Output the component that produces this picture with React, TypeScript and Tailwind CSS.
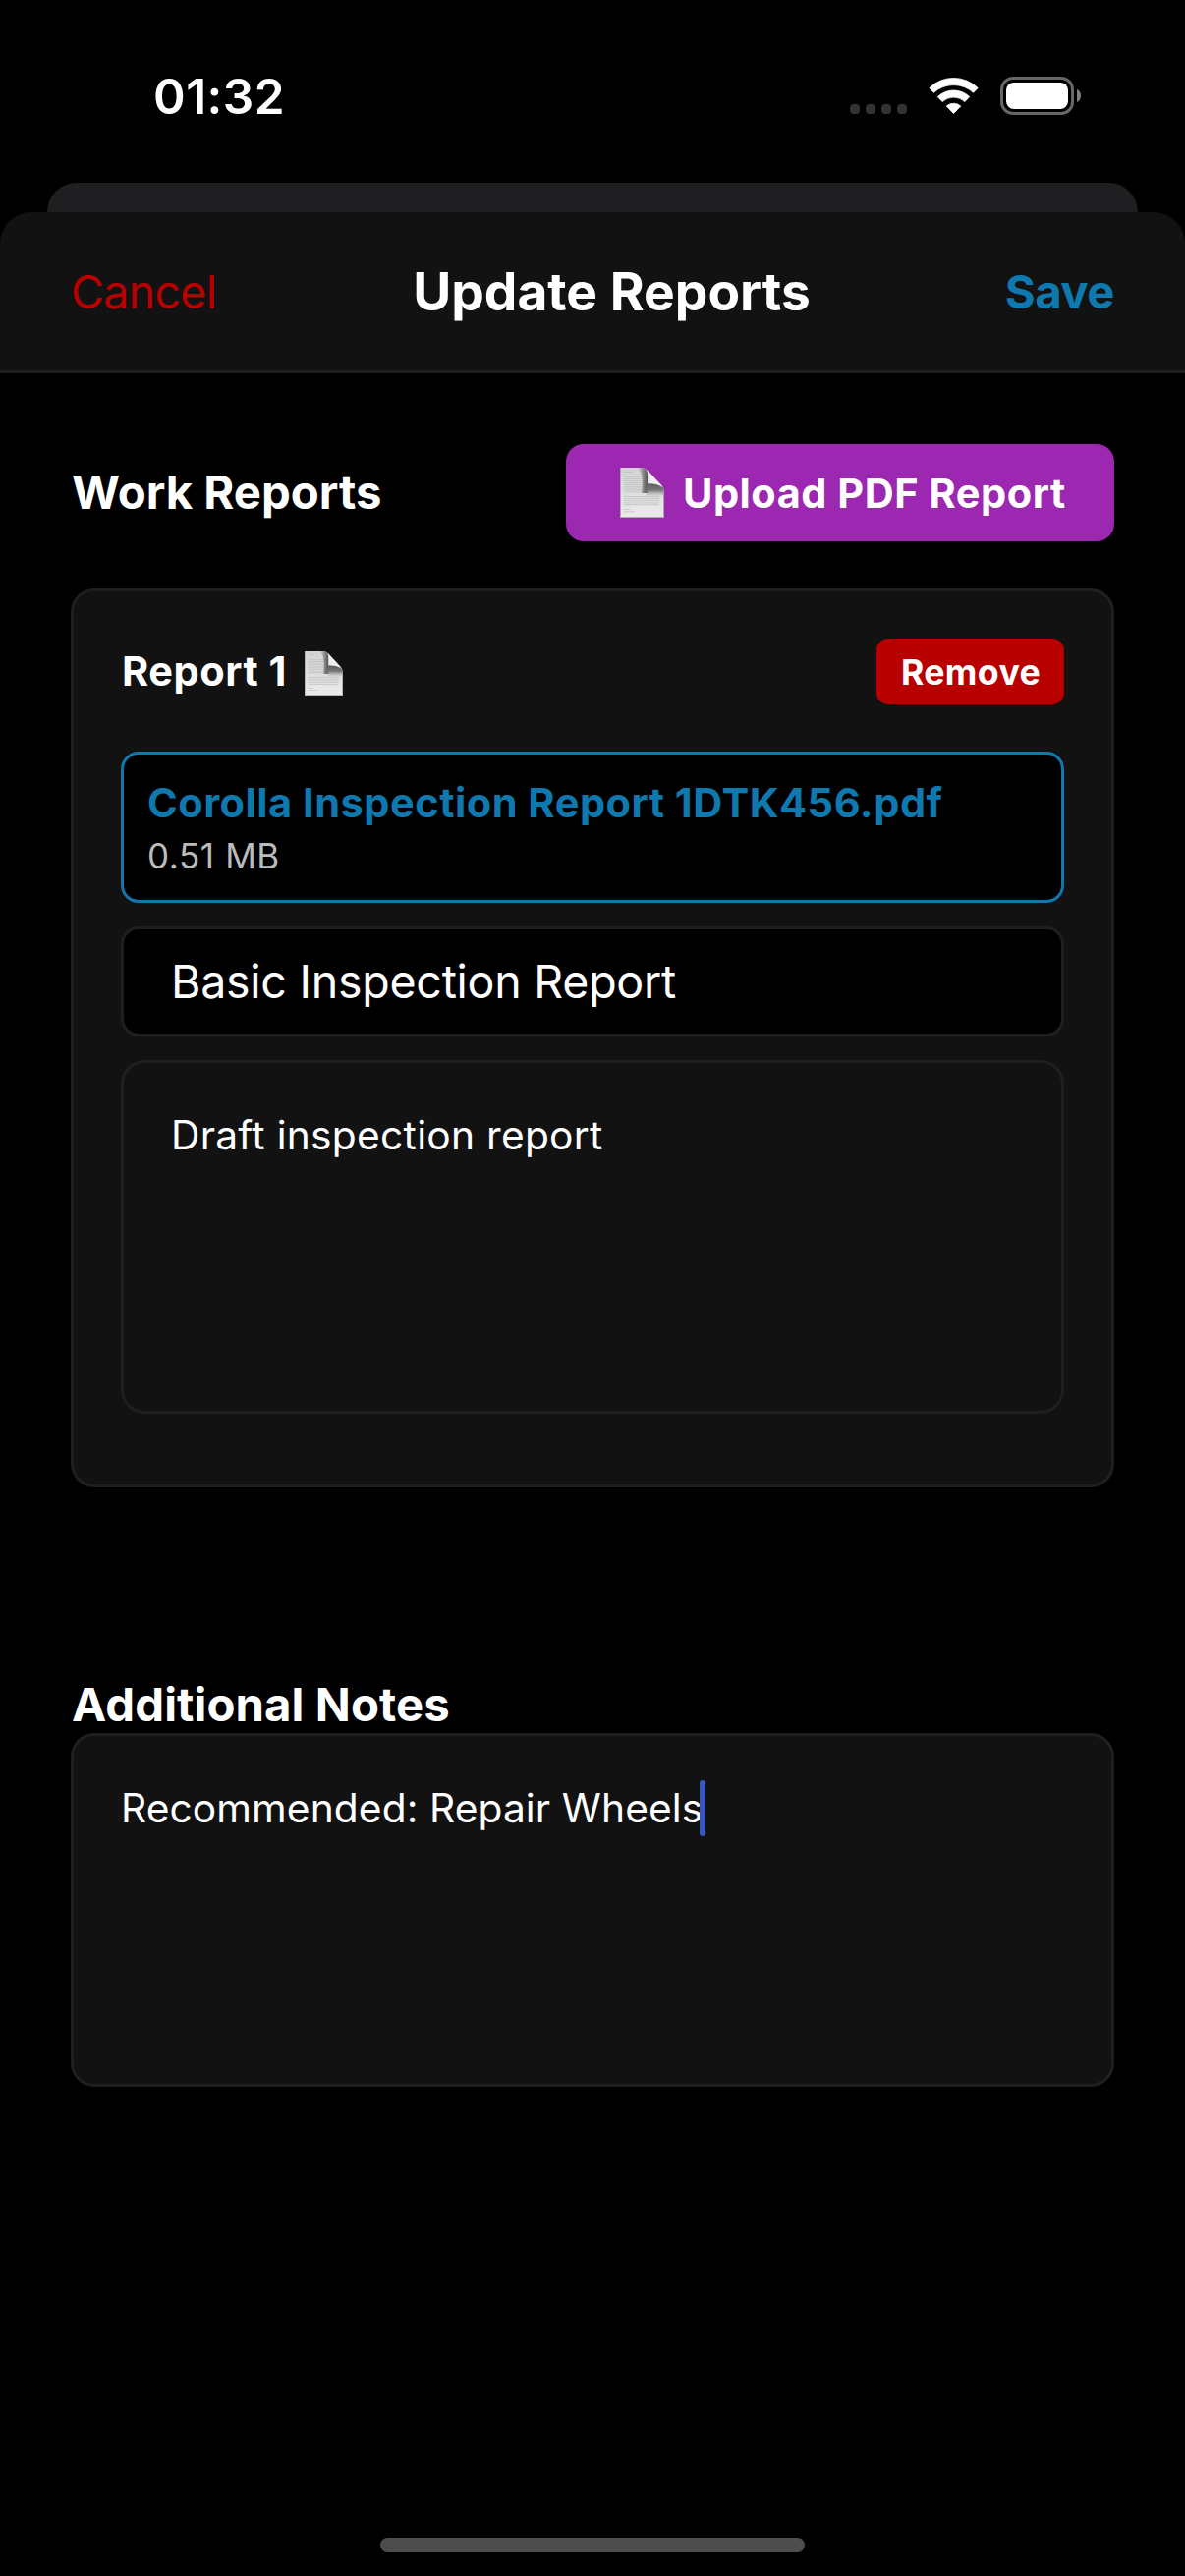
function Wifi() {
  return (
    <svg width="51" height="37" viewBox="0 0 51 37" className="block" fill="#fff" stroke="#fff" strokeWidth="0.8" strokeLinejoin="round">
      <path d="M0.8 10.6A35 35 0 0 1 50.2 10.6L45.6 15.3A30 30 0 0 0 5.4 15.3Z" />
      <path d="M9.3 19.6A23.2 23.2 0 0 1 41.7 19.6L36.9 24.6A16.6 16.6 0 0 0 14.1 24.6Z" />
      <path d="M18.2 29A11 11 0 0 1 32.8 29L25.5 36.6Z" />
    </svg>
  );
}

function Battery() {
  return (
    <div className="flex items-center gap-[3px]">
      <div className="h-[39px] w-[75px] rounded-[13px] border-[3px] border-[#666666] p-[3px]">
        <div className="h-full w-full rounded-[8px] bg-white" />
      </div>
      <svg width="4" height="13" viewBox="0 0 4 13" className="block">
        <path d="M0 0C2.6 1.2 4 3.6 4 6.5S2.6 11.8 0 13Z" fill="#808080" />
      </svg>
    </div>
  );
}

function PageIcon({ id, className }: { id: string; className: string }) {
  const lines = [
    [4, 11.5], [9.3, 26], [11.2, 24], [13.1, 25], [15, 24], [16.9, 26], [18.8, 25], [20.7, 25], [22.6, 26], [24.5, 22],
    [29.3, 36], [31.4, 37], [33.5, 36], [35.6, 36], [37.4, 35], [42, 10], [44.5, 15],
  ];
  return (
    <svg viewBox="0 0 45 51" preserveAspectRatio="none" className={className}>
      <defs>
        <linearGradient id={`${id}-paper`} x1="0" y1="0" x2="0" y2="1">
          <stop offset="0" stopColor="#d4d4d4" />
          <stop offset="0.5" stopColor="#dedede" />
          <stop offset="1" stopColor="#ececec" />
        </linearGradient>
        <linearGradient id={`${id}-left`} x1="0" y1="0" x2="1" y2="0">
          <stop offset="0" stopColor="#4a4a4a" stopOpacity="0" />
          <stop offset="1" stopColor="#4a4a4a" stopOpacity="0.95" />
        </linearGradient>
        <linearGradient id={`${id}-under`} x1="0" y1="0" x2="0" y2="1">
          <stop offset="0" stopColor="#5c5c5c" />
          <stop offset="0.5" stopColor="#777777" />
          <stop offset="1" stopColor="#bbbbbb" stopOpacity="0" />
        </linearGradient>
        <linearGradient id={`${id}-flap`} x1="1" y1="0" x2="0" y2="1">
          <stop offset="0" stopColor="#ffffff" />
          <stop offset="1" stopColor="#e4e4e4" />
        </linearGradient>
        <clipPath id={`${id}-clip`}>
          <path d="M0 0H22C25.5 0 27.5 2 29.5 4.3L42 17.5C44 19.8 45 22 45 25V51H0Z" />
        </clipPath>
      </defs>
      <g clipPath={`url(#${id}-clip)`}>
        <rect width="45" height="51" fill={`url(#${id}-paper)`} />
        {lines.map(([y, end]) => (
          <rect key={y} x="4" y={y} width={end < 16 ? end - 4 : end} height="0.7" fill="#bcbcbc" />
        ))}
        <path d="M18 0H24C27 1 28 4 28 8V26H22C23.5 14 23 6 18 0Z" fill={`url(#${id}-left)`} />
        <path d="M27 16C33 16 40 17 45 21.5V30L27 29Z" fill={`url(#${id}-under)`} />
        <path d="M28.2 3L42.5 18.5C38 16.6 33 16.2 28.2 16.4Z" fill={`url(#${id}-flap)`} />
        <path d="M0.5 0V50.5H44.5V25" fill="none" stroke="#a8a8a8" strokeWidth="1" />
      </g>
    </svg>
  );
}

export default function App() {
  return (
    <div className="flex h-[2622px] w-[1206px] flex-col overflow-hidden bg-black font-['Inter',sans-serif] text-white">
      <div className="flex h-[186px] shrink-0 items-start justify-between pr-[106px] pl-[156px]">
        <span className="mt-[68px] text-[49.5px] leading-[60px] font-semibold tracking-[0.5px]">01:32</span>
        <div className="mt-[78px] flex">
          <div className="mt-7 flex gap-[6px]">
            <span className="size-[10px] rounded-[4px] bg-[#333333]" />
            <span className="size-[10px] rounded-[4px] bg-[#333333]" />
            <span className="size-[10px] rounded-[4px] bg-[#333333]" />
            <span className="size-[10px] rounded-[4px] bg-[#333333]" />
          </div>
          <div className="mt-px ml-[22px]">
            <Wifi />
          </div>
          <div className="ml-[22px]">
            <Battery />
          </div>
        </div>
      </div>

      <div className="mx-[48px] -mb-[30px] h-[60px] shrink-0 rounded-t-[30px] bg-[#1f1f21]" />

      <header className="flex h-[164px] shrink-0 items-center justify-between rounded-t-[32px] border-b-[3px] border-[#1f1f1f] bg-[#121212] px-[72px]">
        <button className="text-[46.5px] leading-[58px] tracking-[-0.7px] text-[#b90000]">Cancel</button>
        <h1 className="pl-[2px] text-[53.3px] leading-[64px] font-bold">Update Reports</h1>
        <button className="text-[47.3px] leading-[58px] font-bold tracking-[-0.5px] text-[#0f78ae]">Save</button>
      </header>

      <main className="flex grow flex-col px-[72px] pt-[72px]">
        <div className="flex h-[99px] items-center justify-between">
          <h2 className="pb-[2px] pl-px text-[47.3px] leading-[58px] font-bold">Work Reports</h2>
          <button className="flex h-[99px] w-[558px] items-center rounded-[18px] bg-[#9c27b0] pl-[55px]">
            <PageIcon id="upload" className="h-[51px] w-[45px]" />
            <span className="pl-[19px] text-[41.5px] leading-[50px] font-bold whitespace-nowrap tracking-[0.52px]">
              Upload PDF Report
            </span>
          </button>
        </div>

        <section className="mt-12 flex h-[915px] flex-col rounded-[24px] border-[3px] border-[#1f1f1f] bg-[#121212] p-12">
          <div className="flex h-[67px] items-center justify-between">
            <div className="flex items-center pl-px">
              <h3 className="pb-px text-[41.5px] leading-[50px] font-bold tracking-[0.53px]">Report 1</h3>
              <PageIcon id="report" className="mt-1 ml-[18px] h-[45px] w-[39px]" />
            </div>
            <button className="h-[67px] w-[191px] rounded-[12px] bg-[#b90000] pt-px pl-px text-[35.7px] leading-[43px] font-bold tracking-[0.35px]">
              Remove
            </button>
          </div>

          <div className="mt-12 h-[154px] rounded-[18px] border-[3px] border-[#0f78ae] bg-black px-6 pt-6">
            <p className="text-[41.5px] leading-[50px] font-bold whitespace-nowrap tracking-[0.52px] text-[#0f78ae]">
              Corolla Inspection Report 1DTK456.pdf
            </p>
            <p className="mt-2 text-[35px] leading-[43px] tracking-[0.6px] text-[#bbbbbb]">0.51 MB</p>
          </div>

          <div className="mt-6 flex h-[112px] items-center rounded-[18px] border-[3px] border-[#1f1f1f] bg-black px-12">
            <span className="text-[46.5px] leading-[58px] tracking-[-0.25px]">Basic Inspection Report</span>
          </div>

          <div className="mt-6 h-[360px] rounded-[24px] border-[3px] border-[#1f1f1f] px-12 pt-[49px]">
            <p className="text-[40.7px] leading-[50px] tracking-[0.28px]">Draft inspection report</p>
          </div>
        </section>

        <h2 className="mt-[192px] pl-px text-[47.3px] leading-[58px] font-bold tracking-[0.1px]">Additional Notes</h2>
        <div className="flex h-[360px] items-start rounded-[24px] border-[3px] border-[#1f1f1f] bg-[#121212] px-12 pt-[45px]">
          <p className="pt-1 text-[40.7px] leading-[50px] whitespace-nowrap tracking-[0.1px]">Recommended: Repair Wheels</p>
          <span className="-ml-[3px] h-[57px] w-[6px] rounded-full bg-[#3957c0]" />
        </div>
      </main>

      <div className="mx-auto mb-6 h-[15px] w-[432px] shrink-0 rounded-full bg-[#4d4d4d]" />
    </div>
  );
}
